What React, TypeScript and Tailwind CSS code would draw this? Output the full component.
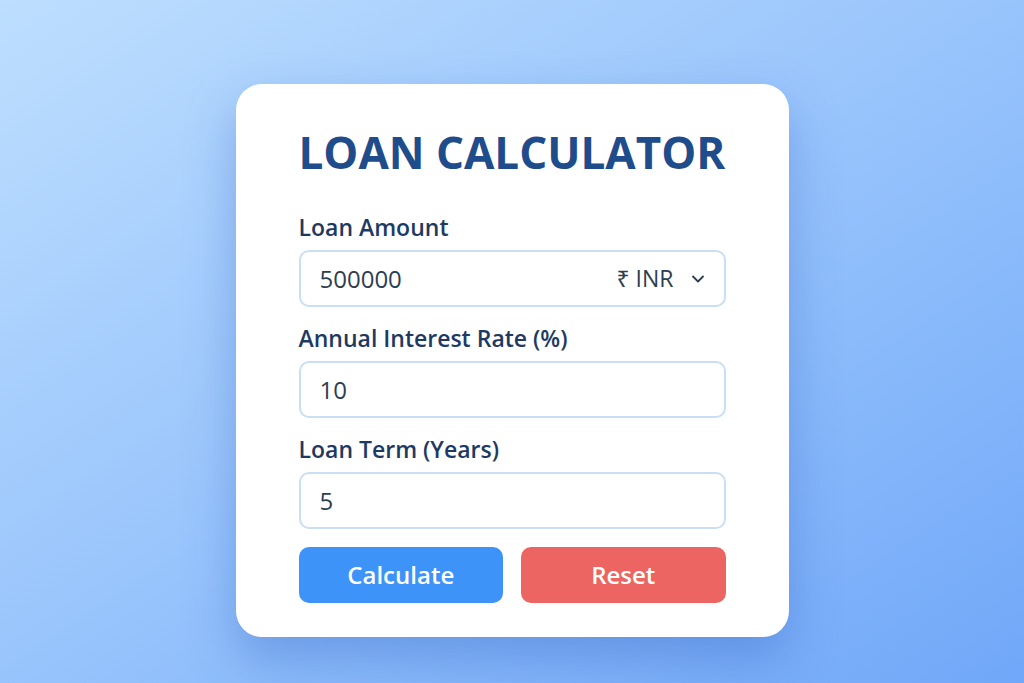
import { ChevronDown } from 'lucide-react';

const FONT = "font-['Open_Sans','Noto_Sans',sans-serif]";

function Field({ label, value, currency }: { label: string; value: string; currency?: boolean }) {
  return (
    <div className="flex flex-col">
      <label className="h-[30px] text-[23px] leading-[30px] font-semibold text-[#1e3a63] whitespace-nowrap">{label}</label>
      <div className="mt-2 h-[57px] rounded-[10px] border-2 border-[#cadef6] bg-white flex items-center pl-[19px] pr-[16px]">
        <span className="flex-1 text-[24px] text-[#2c3e50]">{value}</span>
        {currency && (
          <div className="flex items-center gap-[14px] text-[23px] text-[#2c3e50]">
            <span>₹ INR</span>
            <ChevronDown size={20} strokeWidth={2.2} />
          </div>
        )}
      </div>
    </div>
  );
}

export default function App() {
  return (
    <div className={`${FONT} w-[1024px] h-[683px] overflow-hidden flex justify-center pt-[84px] bg-linear-to-br from-[#bddefe] via-[#98c4fc] to-[#70a7f8]`}>
      <div className="w-[553px] h-[553px] bg-white rounded-[26px] shadow-[0_22px_50px_rgba(40,90,190,0.35)] px-[63px] pt-[38px]">
        <h1 className="text-[44px] leading-[60px] font-bold text-[#1f4c8a] whitespace-nowrap">LOAN CALCULATOR</h1>
        <div className="mt-[30px] flex flex-col gap-4">
          <Field label="Loan Amount" value="500000" currency />
          <Field label="Annual Interest Rate (%)" value="10" />
          <Field label="Loan Term (Years)" value="5" />
        </div>
        <div className="mt-[18px] grid grid-cols-2 gap-[18px]">
          <button className="h-[56px] rounded-[10px] bg-[#3d93f8] text-white text-[24px] font-semibold">Calculate</button>
          <button className="h-[56px] rounded-[10px] bg-[#ec6562] text-white text-[24px] font-semibold">Reset</button>
        </div>
      </div>
    </div>
  );
}
